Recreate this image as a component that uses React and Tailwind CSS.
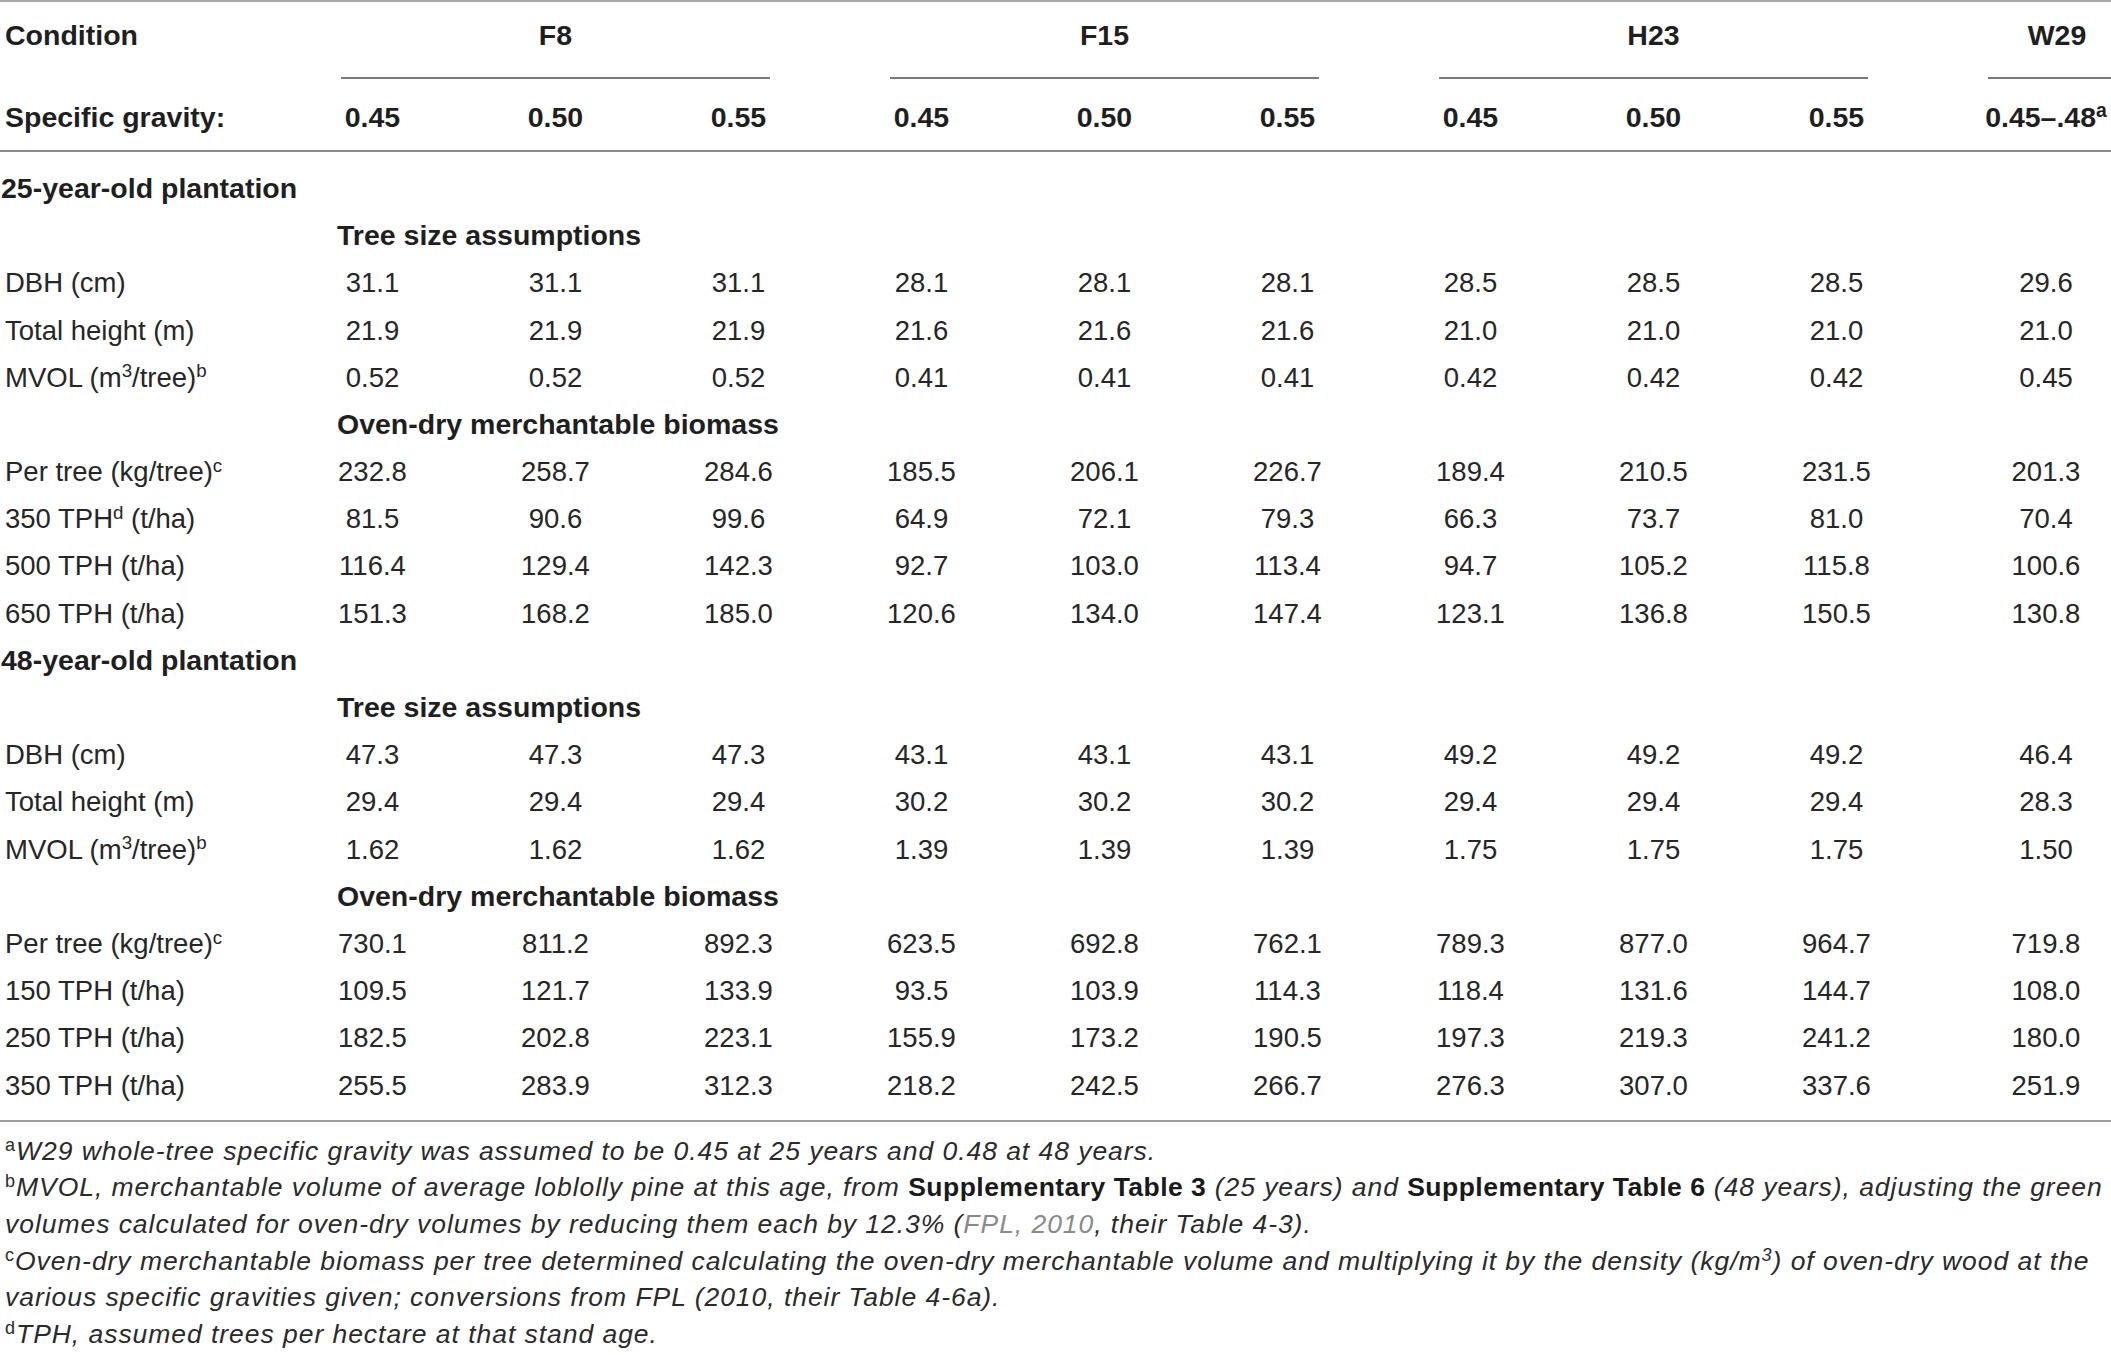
import React from 'react'

const font = { fontFamily: '"Liberation Sans", Arial, sans-serif' }

const sections = [
  {
    title: '25-year-old plantation',
    size: [
      { label: 'DBH (cm)', vals: ['31.1', '31.1', '31.1', '28.1', '28.1', '28.1', '28.5', '28.5', '28.5', '29.6'] },
      { label: 'Total height (m)', vals: ['21.9', '21.9', '21.9', '21.6', '21.6', '21.6', '21.0', '21.0', '21.0', '21.0'] },
      { label: 'mvol', vals: ['0.52', '0.52', '0.52', '0.41', '0.41', '0.41', '0.42', '0.42', '0.42', '0.45'] },
    ],
    biomass: [
      { label: 'per', vals: ['232.8', '258.7', '284.6', '185.5', '206.1', '226.7', '189.4', '210.5', '231.5', '201.3'] },
      { label: 'tph350', vals: ['81.5', '90.6', '99.6', '64.9', '72.1', '79.3', '66.3', '73.7', '81.0', '70.4'] },
      { label: '500 TPH (t/ha)', vals: ['116.4', '129.4', '142.3', '92.7', '103.0', '113.4', '94.7', '105.2', '115.8', '100.6'] },
      { label: '650 TPH (t/ha)', vals: ['151.3', '168.2', '185.0', '120.6', '134.0', '147.4', '123.1', '136.8', '150.5', '130.8'] },
    ],
  },
  {
    title: '48-year-old plantation',
    size: [
      { label: 'DBH (cm)', vals: ['47.3', '47.3', '47.3', '43.1', '43.1', '43.1', '49.2', '49.2', '49.2', '46.4'] },
      { label: 'Total height (m)', vals: ['29.4', '29.4', '29.4', '30.2', '30.2', '30.2', '29.4', '29.4', '29.4', '28.3'] },
      { label: 'mvol', vals: ['1.62', '1.62', '1.62', '1.39', '1.39', '1.39', '1.75', '1.75', '1.75', '1.50'] },
    ],
    biomass: [
      { label: 'per', vals: ['730.1', '811.2', '892.3', '623.5', '692.8', '762.1', '789.3', '877.0', '964.7', '719.8'] },
      { label: '150 TPH (t/ha)', vals: ['109.5', '121.7', '133.9', '93.5', '103.9', '114.3', '118.4', '131.6', '144.7', '108.0'] },
      { label: '250 TPH (t/ha)', vals: ['182.5', '202.8', '223.1', '155.9', '173.2', '190.5', '197.3', '219.3', '241.2', '180.0'] },
      { label: '350 TPH (t/ha)', vals: ['255.5', '283.9', '312.3', '218.2', '242.5', '266.7', '276.3', '307.0', '337.6', '251.9'] },
    ],
  },
]

const grid = 'grid grid-cols-[281px_repeat(9,183px)_236px]'
const sup = 'text-[0.68em]'
const ref = 'not-italic font-bold text-[#1a1a1a] tracking-[0.018em]'

function Label({ label }) {
  if (label === 'mvol')
    return (
      <span>
        MVOL (m<sup className={sup}>3</sup>/tree)<sup className={sup}>b</sup>
      </span>
    )
  if (label === 'per')
    return (
      <span>
        Per tree (kg/tree)<sup className={sup}>c</sup>
      </span>
    )
  if (label === 'tph350')
    return (
      <span>
        350 TPH<sup className={sup}>d</sup> (t/ha)
      </span>
    )
  return <span>{label}</span>
}

function DataRow({ row }) {
  return (
    <div className={`${grid} h-[47.2px] items-center`}>
      <div className="pl-[5px] whitespace-nowrap">
        <Label label={row.label} />
      </div>
      {row.vals.map((v, i) => (
        <div key={i} className="text-center">
          {v}
        </div>
      ))}
    </div>
  )
}

function SubHead({ text }) {
  return (
    <div className={`${grid} h-[47.2px] items-center`}>
      <div />
      <div className="col-span-10 pl-[56px] font-bold text-[#1f1f1f] text-[28.5px]">{text}</div>
    </div>
  )
}

export default function App() {
  return (
    <div className="w-[2111px] overflow-hidden bg-white text-[#262626] text-[27.5px]" style={font}>
      <div className="w-[2164px]">
        {/* header */}
        <div className="border-t-2 border-[#a8a8a8] border-b-2 border-b-[#8a8a8a] font-bold text-[#1f1f1f] text-[28.5px]">
          <div className={`${grid} h-[66px] items-center`}>
            <div className="pl-[5px]">Condition</div>
            <div className="col-span-3 text-center">F8</div>
            <div className="col-span-3 text-center">F15</div>
            <div className="col-span-3 text-center">H23</div>
            <div className="text-center pl-[22px]">W29</div>
          </div>
          <div className={`${grid} h-[20px] pt-[9px]`}>
            <div />
            <div className="col-span-3 mx-[60px] h-[2px] bg-[#7a7a7a]" />
            <div className="col-span-3 mx-[60px] h-[2px] bg-[#7a7a7a]" />
            <div className="col-span-3 mx-[60px] h-[2px] bg-[#7a7a7a]" />
            <div className="ml-[60px] h-[2px] bg-[#7a7a7a]" />
          </div>
          <div className={`${grid} h-[62px] pb-[4px] items-center`}>
            <div className="pl-[5px]">Specific gravity:</div>
            {['0.45', '0.50', '0.55', '0.45', '0.50', '0.55', '0.45', '0.50', '0.55'].map((v, i) => (
              <div key={i} className="text-center">
                {v}
              </div>
            ))}
            <div className="text-center">
              0.45–.48<sup className={sup}>a</sup>
            </div>
          </div>
        </div>

        {/* body */}
        <div className="pt-[13px] pb-[11px] border-b-2 border-[#9a9a9a]">
          {sections.map((s) => (
            <div key={s.title}>
              <div className="h-[47.2px] flex items-center pl-[1px] font-bold text-[#1f1f1f] text-[28.5px]">
                {s.title}
              </div>
              <SubHead text="Tree size assumptions" />
              {s.size.map((r, i) => (
                <DataRow key={i} row={r} />
              ))}
              <SubHead text="Oven-dry merchantable biomass" />
              {s.biomass.map((r, i) => (
                <DataRow key={i} row={r} />
              ))}
            </div>
          ))}
        </div>

        {/* footnotes */}
        <div className="pt-[11px] pl-[5px] text-[26.5px] tracking-[0.036em] leading-[36.6px] text-[#2a2a2a] whitespace-nowrap">
          <div>
            <sup className={sup}>a</sup>
            <i>W29 whole-tree specific gravity was assumed to be 0.45 at 25 years and 0.48 at 48 years.</i>
          </div>
          <div>
            <sup className={sup}>b</sup>
            <i>
              MVOL, merchantable volume of average loblolly pine at this age, from{' '}
              <b className={ref}>Supplementary Table 3</b> (25 years) and <b className={ref}>Supplementary Table 6</b>{' '}
              (48 years), adjusting the green
            </i>
          </div>
          <div>
            <i>
              volumes calculated for oven-dry volumes by reducing them each by 12.3% (
              <span className="text-[#8a8a8a]">FPL, 2010</span>, their Table 4-3).
            </i>
          </div>
          <div>
            <sup className={sup}>c</sup>
            <i>
              Oven-dry merchantable biomass per tree determined calculating the oven-dry merchantable volume and
              multiplying it by the density (kg/m<sup className={sup}>3</sup>) of oven-dry wood at the
            </i>
          </div>
          <div>
            <i>various specific gravities given; conversions from FPL (2010, their Table 4-6a).</i>
          </div>
          <div>
            <sup className={sup}>d</sup>
            <i>TPH, assumed trees per hectare at that stand age.</i>
          </div>
        </div>
      </div>
    </div>
  )
}
